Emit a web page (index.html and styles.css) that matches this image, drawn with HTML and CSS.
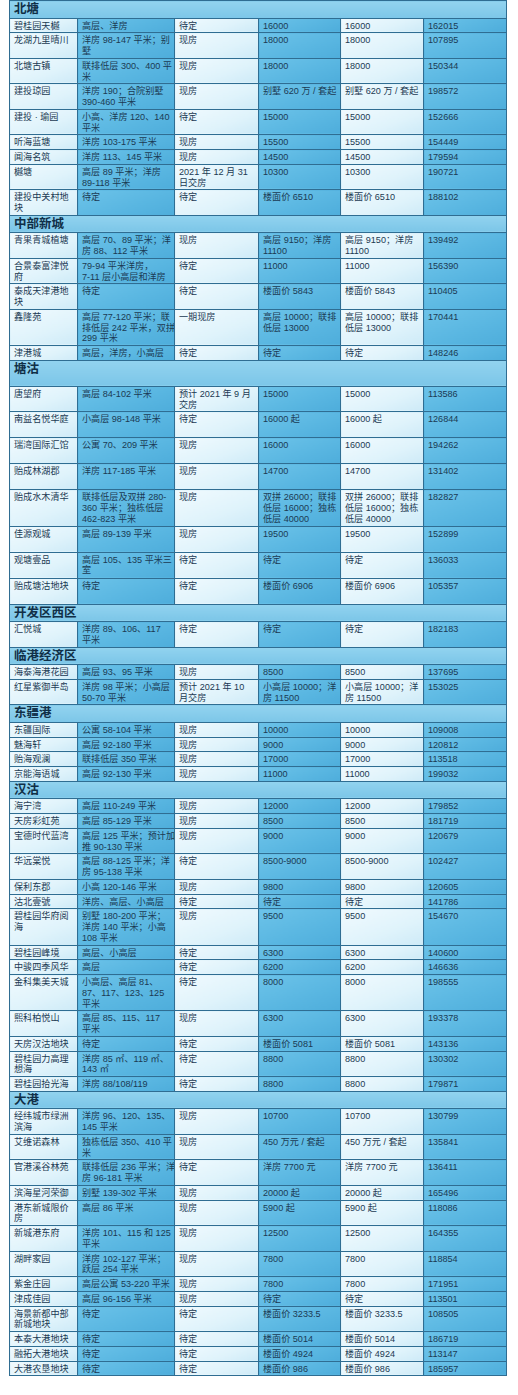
FILE: index.html
```html
<!DOCTYPE html>
<html lang="zh-CN">
<head>
<meta charset="utf-8">
<title>天津楼盘价格表</title>
<link rel="stylesheet" href="styles.css">
</head>
<body>
<div class="page">
<table class="prices">
<colgroup>
<col class="w1"><col class="w2"><col class="w3"><col class="w4"><col class="w5"><col class="w6">
</colgroup>
<tbody>
<tr class="sec"><td colspan="6">北塘</td></tr>
<tr><td>碧桂园天樾</td><td>高层、洋房</td><td>待定</td><td>16000</td><td>16000</td><td>162015</td></tr>
<tr><td>龙湖九里晴川</td><td>洋房 98-147 平米；别<br>墅</td><td>现房</td><td>18000</td><td>18000</td><td>107895</td></tr>
<tr><td>北塘古镇</td><td>联排低层 300、400 平<br>米</td><td>现房</td><td>18000</td><td>18000</td><td>150344</td></tr>
<tr><td>建投琼园</td><td>洋房 190；合院别墅<br>390-460 平米</td><td>现房</td><td>别墅 620 万 / 套起</td><td>别墅 620 万 / 套起</td><td>198572</td></tr>
<tr><td>建投 · 瑜园</td><td>小高、洋房 120、140<br>平米</td><td>待定</td><td>15000</td><td>15000</td><td>152666</td></tr>
<tr><td>听海蓝塘</td><td>洋房 103-175 平米</td><td>现房</td><td>15500</td><td>15500</td><td>154449</td></tr>
<tr><td>闻海名筑</td><td>洋房 113、145 平米</td><td>现房</td><td>14500</td><td>14500</td><td>179594</td></tr>
<tr><td>樾塘</td><td>高层 89 平米；洋房<br>89-118 平米</td><td>2021 年 12 月 31<br>日交房</td><td>10300</td><td>10300</td><td>190721</td></tr>
<tr><td>建投中关村地<br>块</td><td>待定</td><td>待定</td><td>楼面价 6510</td><td>楼面价 6510</td><td>188102</td></tr>

<tr class="sec"><td colspan="6">中部新城</td></tr>
<tr><td>青果青城植塘</td><td>高层 70、89 平米；洋<br>房 88、112 平米</td><td>现房</td><td>高层 9150；洋房<br>11100</td><td>高层 9150；洋房<br>11100</td><td>139492</td></tr>
<tr><td>合景泰富津悦<br>府</td><td>79-94 平米洋房，<br>7-11 层小高层和洋房</td><td>待定</td><td>11000</td><td>11000</td><td>156390</td></tr>
<tr><td>泰成天津港地<br>块</td><td>待定</td><td>待定</td><td>楼面价 5843</td><td>楼面价 5843</td><td>110405</td></tr>
<tr><td>鑫隆苑</td><td>高层 77-120 平米；联<br>排低层 242 平米，双拼<br>299 平米</td><td>一期现房</td><td>高层 10000；联排<br>低层 13000</td><td>高层 10000；联排<br>低层 13000</td><td>170441</td></tr>
<tr><td>津港城</td><td>高层，洋房，小高层</td><td>待定</td><td>待定</td><td>待定</td><td>148246</td></tr>

<tr class="sec tall"><td colspan="6">塘沽</td></tr>
<tr><td>唐望府</td><td>高层 84-102 平米</td><td>预计 2021 年 9 月<br>交房</td><td>15000</td><td>15000</td><td>113586</td></tr>
<tr class="tall"><td>南益名悦华庭</td><td>小高层 98-148 平米</td><td>待定</td><td>16000 起</td><td>16000 起</td><td>126844</td></tr>
<tr class="tall"><td>瑞湾国际汇馆</td><td>公寓 70、209 平米</td><td>现房</td><td>16000</td><td>16000</td><td>194262</td></tr>
<tr class="tall"><td>贻成林湖郡</td><td>洋房 117-185 平米</td><td>现房</td><td>14700</td><td>14700</td><td>131402</td></tr>
<tr><td>贻成水木清华</td><td>联排低层及双拼 280-<br>360 平米；独栋低层<br>462-823 平米</td><td>现房</td><td>双拼 26000；联排<br>低层 16000；独栋<br>低层 40000</td><td>双拼 26000；联排<br>低层 16000；独栋<br>低层 40000</td><td>182827</td></tr>
<tr class="tall"><td>佳源观城</td><td>高层 89-139 平米</td><td>现房</td><td>19500</td><td>19500</td><td>152899</td></tr>
<tr class="tall"><td>观塘壹品</td><td>高层 105、135 平米三<br>室</td><td>待定</td><td>待定</td><td>待定</td><td>136033</td></tr>
<tr class="tall"><td>贻成塘沽地块</td><td>待定</td><td>待定</td><td>楼面价 6906</td><td>楼面价 6906</td><td>105357</td></tr>

<tr class="sec"><td colspan="6">开发区西区</td></tr>
<tr><td>汇悦城</td><td>洋房 89、106、117<br>平米</td><td>待定</td><td>待定</td><td>待定</td><td>182183</td></tr>

<tr class="sec"><td colspan="6">临港经济区</td></tr>
<tr><td>海泰海港花园</td><td>高层 93、95 平米</td><td>现房</td><td>8500</td><td>8500</td><td>137695</td></tr>
<tr><td>红星紫御半岛</td><td>洋房 98 平米；小高层<br>50-70 平米</td><td>预计 2021 年 10<br>月交房</td><td>小高层 10000；洋<br>房 11500</td><td>小高层 10000；洋<br>房 11500</td><td>153025</td></tr>

<tr class="sec"><td colspan="6">东疆港</td></tr>
<tr><td>东疆国际</td><td>公寓 58-104 平米</td><td>现房</td><td>10000</td><td>10000</td><td>109008</td></tr>
<tr><td>魅海轩</td><td>高层 92-180 平米</td><td>现房</td><td>9000</td><td>9000</td><td>120812</td></tr>
<tr><td>贻海观澜</td><td>联排低层 350 平米</td><td>现房</td><td>17000</td><td>17000</td><td>113518</td></tr>
<tr><td>京能海语城</td><td>高层 92-130 平米</td><td>现房</td><td>11000</td><td>11000</td><td>199032</td></tr>

<tr class="sec"><td colspan="6">汉沽</td></tr>
<tr><td>海宁湾</td><td>高层 110-249 平米</td><td>现房</td><td>12000</td><td>12000</td><td>179852</td></tr>
<tr><td>天房彩虹苑</td><td>高层 85-129 平米</td><td>现房</td><td>8500</td><td>8500</td><td>181719</td></tr>
<tr><td>宝德时代蓝湾</td><td>高层 125 平米；预计加<br>推 90-130 平米</td><td>现房</td><td>9000</td><td>9000</td><td>120679</td></tr>
<tr><td>华远棠悦</td><td>高层 88-125 平米；洋<br>房 95-138 平米</td><td>待定</td><td>8500-9000</td><td>8500-9000</td><td>102427</td></tr>
<tr><td>保利东郡</td><td>小高 120-146 平米</td><td>现房</td><td>9800</td><td>9800</td><td>120605</td></tr>
<tr><td>沽北壹號</td><td>洋房、高层、小高层</td><td>待定</td><td>待定</td><td>待定</td><td>141786</td></tr>
<tr><td>碧桂园华府阅<br>海</td><td>别墅 180-200 平米；<br>洋房 140 平米；小高<br>108 平米</td><td>现房</td><td>9500</td><td>9500</td><td>154670</td></tr>
<tr><td>碧桂园峰境</td><td>高层、小高层</td><td>待定</td><td>6300</td><td>6300</td><td>140600</td></tr>
<tr><td>中骏四季风华</td><td>高层</td><td>待定</td><td>6200</td><td>6200</td><td>146636</td></tr>
<tr><td>金科集美天城</td><td>小高层、高层 81、<br>87、117、123、125<br>平米</td><td>待定</td><td>8000</td><td>8000</td><td>198555</td></tr>
<tr><td>熙科柏悦山</td><td>高层 85、115、117<br>平米</td><td>现房</td><td>6300</td><td>6300</td><td>193378</td></tr>
<tr><td>天房汉沽地块</td><td>待定</td><td>待定</td><td>楼面价 5081</td><td>楼面价 5081</td><td>143136</td></tr>
<tr><td>碧桂园力高理<br>想海</td><td>洋房 85 ㎡、119 ㎡、<br>143 ㎡</td><td>待定</td><td>8800</td><td>8800</td><td>130302</td></tr>
<tr><td>碧桂园拾光海</td><td>洋房 88/108/119</td><td>待定</td><td>8800</td><td>8800</td><td>179871</td></tr>

<tr class="sec"><td colspan="6">大港</td></tr>
<tr><td>经纬城市绿洲<br>滨海</td><td>洋房 96、120、135、<br>145 平米</td><td>现房</td><td>10700</td><td>10700</td><td>130799</td></tr>
<tr><td>艾维诺森林</td><td>独栋低层 350、410 平<br>米</td><td>现房</td><td>450 万元 / 套起</td><td>450 万元 / 套起</td><td>135841</td></tr>
<tr><td>官港溪谷林苑</td><td>联排低层 236 平米；洋<br>房 96-181 平米</td><td>待定</td><td>洋房 7700 元</td><td>洋房 7700 元</td><td>136411</td></tr>
<tr><td>滨海星河荣御</td><td>别墅 139-302 平米</td><td>现房</td><td>20000 起</td><td>20000 起</td><td>165496</td></tr>
<tr><td>港东新城限价<br>房</td><td>高层 86 平米</td><td>现房</td><td>5900 起</td><td>5900 起</td><td>118086</td></tr>
<tr><td>新城港东府</td><td>洋房 101、115 和 125<br>平米</td><td>现房</td><td>12500</td><td>12500</td><td>164355</td></tr>
<tr><td>湖畔家园</td><td>洋房 102-127 平米；<br>跃层 254 平米</td><td>现房</td><td>7800</td><td>7800</td><td>118854</td></tr>
<tr><td>紫金庄园</td><td>高层公寓 53-220 平米</td><td>现房</td><td>7800</td><td>7800</td><td>171951</td></tr>
<tr><td>津成佳园</td><td>高层 96-156 平米</td><td>现房</td><td>待定</td><td>待定</td><td>113501</td></tr>
<tr><td>海景新都中部<br>新城地块</td><td>待定</td><td>待定</td><td>楼面价 3233.5</td><td>楼面价 3233.5</td><td>108505</td></tr>
<tr><td>本泰大港地块</td><td>待定</td><td>待定</td><td>楼面价 5014</td><td>楼面价 5014</td><td>186719</td></tr>
<tr><td>融拓大港地块</td><td>待定</td><td>待定</td><td>楼面价 4924</td><td>楼面价 4924</td><td>113147</td></tr>
<tr><td>大港农垦地块</td><td>待定</td><td>待定</td><td>楼面价 986</td><td>楼面价 986</td><td>185957</td></tr>
</tbody>
</table>
</div>
</body>
</html>
```

FILE: styles.css
```css
html, body {
  margin: 0;
  padding: 0;
  background: #ffffff;
}

.page {
  padding: 0 12px 0 9px;
}

.prices {
  width: 497px;
  table-layout: fixed;
  border-collapse: collapse;
  border: 1px solid #2f6d92;
  font-family: "Liberation Sans", "Noto Sans CJK SC", sans-serif;
  font-size: 9.1px;
  line-height: 10.75px;
  color: #1b3a53;
}

.w1 { width: 68px; }
.w2 { width: 97px; }
.w3 { width: 84px; }
.w4 { width: 82px; }
.w5 { width: 83px; }
.w6 { width: 83px; }

.prices td {
  border: 1px solid #2f6d92;
  padding: 2px 0 1px 4px;
  vertical-align: top;
  white-space: nowrap;
  overflow: hidden;
}

.prices td:nth-child(odd) {
  background: linear-gradient(160deg, #f1fafe 0%, #dff3fb 60%, #cdeaf7 100%);
}

.prices td:nth-child(even) {
  background: linear-gradient(160deg, #6cc3e9 0%, #59b6e1 60%, #4eaddb 100%);
}

.prices tr.tall {
  height: 26px;
}

.prices tr.sec td {
  background: linear-gradient(180deg, #92d3ef 0%, #7cc6e8 100%);
  font-size: 12.5px;
  line-height: 15.5px;
  font-weight: bold;
  color: #102f47;
  padding: 1px 4px 0 4px;
}
```
